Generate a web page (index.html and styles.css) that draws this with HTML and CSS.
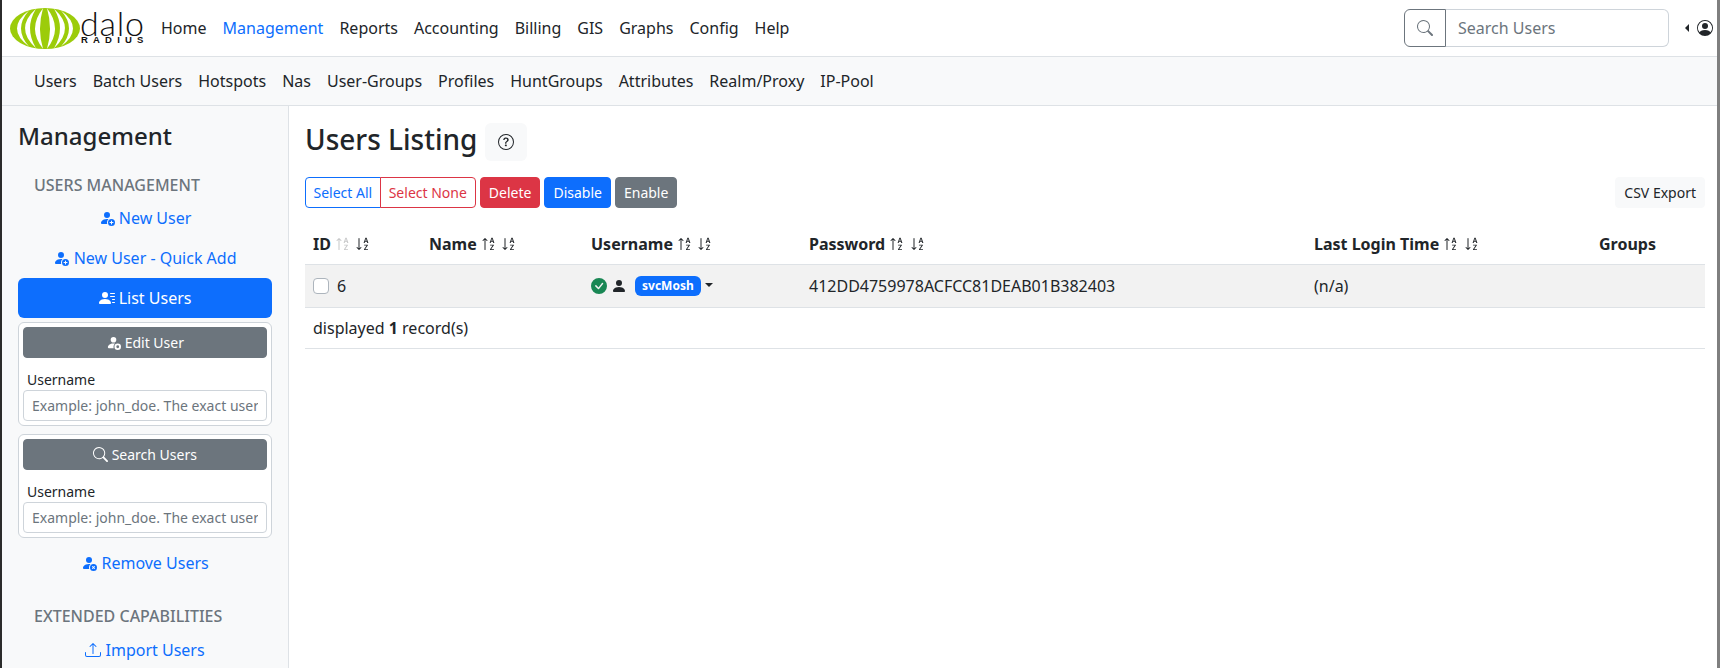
FILE: index.html
```html
<!DOCTYPE html>
<html lang="en">
<head>
    <meta charset="UTF-8">
    <meta name="viewport" content="width=device-width, initial-scale=1.0">
    <title>daloRADIUS - Users Listing</title>
    <link rel="stylesheet" href="styles.css">
</head>
<body>

<svg class="sprite" aria-hidden="true">
    <symbol id="i-add" viewBox="0 0 16 16"><path d="M12.5 16a3.5 3.5 0 1 0 0-7 3.5 3.5 0 0 0 0 7Zm.5-5v1h1a.5.5 0 0 1 0 1h-1v1a.5.5 0 0 1-1 0v-1h-1a.5.5 0 0 1 0-1h1v-1a.5.5 0 0 1 1 0Zm-2-6a3 3 0 1 1-6 0 3 3 0 0 1 6 0Z"/><path d="M2 13c0 1 1 1 1 1h5.256A4.493 4.493 0 0 1 8 12.5a4.49 4.49 0 0 1 1.544-3.393C9.077 9.038 8.564 9 8 9c-5 0-6 3-6 4Z"/></symbol>
    <symbol id="i-remove" viewBox="0 0 16 16"><path d="M11 5a3 3 0 1 1-6 0 3 3 0 0 1 6 0Z"/><path d="M2 13c0 1 1 1 1 1h5.256A4.493 4.493 0 0 1 8 12.5a4.49 4.49 0 0 1 1.544-3.393C9.077 9.038 8.564 9 8 9c-5 0-6 3-6 4Z"/><path d="M12.5 16a3.5 3.5 0 1 0 0-7 3.5 3.5 0 0 0 0 7Zm-.646-4.854.646.647.646-.647a.5.5 0 0 1 .708.708l-.647.646.647.646a.5.5 0 0 1-.708.708l-.646-.647-.646.647a.5.5 0 0 1-.708-.708l.647-.646-.647-.646a.5.5 0 0 1 .708-.708Z"/></symbol>
    <symbol id="i-gear" viewBox="0 0 16 16"><path d="M11 5a3 3 0 1 1-6 0 3 3 0 0 1 6 0Z"/><path d="M2 13c0 1 1 1 1 1h5.256A4.493 4.493 0 0 1 8 12.5a4.49 4.49 0 0 1 1.544-3.393C9.077 9.038 8.564 9 8 9c-5 0-6 3-6 4Z"/><path fill-rule="evenodd" d="M12.5 9a3.5 3.5 0 1 1 0 7 3.5 3.5 0 0 1 0-7Zm0 2a1.500 1.500 0 1 0 0 3 1.500 1.500 0 0 0 0-3Z"/></symbol>
    <symbol id="i-list" viewBox="0 0 16 16"><path d="M6 8a3 3 0 1 0 0-6 3 3 0 0 0 0 6zm-5 6s-1 0-1-1 1-4 6-4 6 3 6 4-1 1-1 1H1zM11 3.500a.5.5 0 0 1 .5-.5h4a.5.5 0 0 1 0 1h-4a.5.5 0 0 1-.5-.5zm.5 2.500a.5.5 0 0 0 0 1h4a.5.5 0 0 0 0-1h-4zm2 3a.5.5 0 0 0 0 1h2a.5.5 0 0 0 0-1h-2zm0 3a.5.5 0 0 0 0 1h2a.5.5 0 0 0 0-1h-2z"/></symbol>
    <symbol id="i-search" viewBox="0 0 16 16"><path d="M11.742 10.344a6.500 6.500 0 1 0-1.397 1.398h-.001c.03.04.062.078.098.115l3.850 3.850a1 1 0 0 0 1.415-1.414l-3.850-3.850a1.007 1.007 0 0 0-.115-.1zM12 6.500a5.500 5.500 0 1 1-11 0 5.500 5.500 0 0 1 11 0z"/></symbol>
    <symbol id="i-upload" viewBox="0 0 16 16"><path d="M.5 9.900a.5.5 0 0 1 .5.5v2.500a1 1 0 0 0 1 1h12a1 1 0 0 0 1-1v-2.500a.5.5 0 0 1 1 0v2.500a2 2 0 0 1-2 2H2a2 2 0 0 1-2-2v-2.500a.5.5 0 0 1 .5-.5z"/><path d="M7.646 1.146a.5.5 0 0 1 .708 0l3 3a.5.5 0 0 1-.708.708L8.500 2.707V11.500a.5.5 0 0 1-1 0V2.707L5.354 4.854a.5.5 0 1 1-.708-.708l3-3z"/></symbol>
    <symbol id="i-help" viewBox="0 0 16 16"><path d="M8 15A7 7 0 1 1 8 1a7 7 0 0 1 0 14zm0 1A8 8 0 1 0 8 0a8 8 0 0 0 0 16z"/><path d="M5.255 5.786a.237.237 0 0 0 .241.247h.825c.138 0 .248-.113.266-.25.09-.656.54-1.134 1.342-1.134.686 0 1.314.343 1.314 1.168 0 .635-.374.927-.965 1.371-.673.489-1.206 1.060-1.168 1.987l.003.217a.25.25 0 0 0 .25.246h.811a.25.25 0 0 0 .25-.25v-.105c0-.718.273-.927 1.010-1.486.609-.463 1.244-.977 1.244-2.056 0-1.511-1.276-2.241-2.673-2.241-1.267 0-2.655.59-2.750 2.286zm1.557 5.763c0 .533.425.927 1.010.927.609 0 1.028-.394 1.028-.927 0-.552-.42-.94-1.029-.94-.584 0-1.009.388-1.009.94z"/></symbol>
    <symbol id="i-check" viewBox="0 0 16 16"><path d="M16 8A8 8 0 1 1 0 8a8 8 0 0 1 16 0zm-3.970-3.030a.75.75 0 0 0-1.080.022L7.477 9.417 5.384 7.323a.75.75 0 0 0-1.060 1.060L6.970 11.030a.75.75 0 0 0 1.079-.02l3.992-4.990a.75.75 0 0 0-.01-1.050z"/></symbol>
    <symbol id="i-person" viewBox="0 0 16 16"><path d="M3 14s-1 0-1-1 1-4 6-4 6 3 6 4-1 1-1 1H3Zm5-6a3 3 0 1 0 0-6 3 3 0 0 0 0 6Z"/></symbol>
    <symbol id="i-account" viewBox="0 0 16 16"><path d="M11 6a3 3 0 1 1-6 0 3 3 0 0 1 6 0z"/><path fill-rule="evenodd" d="M0 8a8 8 0 1 1 16 0A8 8 0 0 1 0 8zm8-7a7 7 0 0 0-5.468 11.370C3.242 11.226 4.805 10 8 10s4.757 1.225 5.468 2.370A7 7 0 0 0 8 1z"/></symbol>
    <symbol id="i-up" viewBox="0 0 16 16"><path fill-rule="evenodd" d="M10.082 5.629 9.664 7H8.598l1.789-5.332h1.234L13.402 7h-1.120l-.419-1.371h-1.781zm1.570-.785L11 2.687h-.047l-.652 2.157h1.351z"/><path d="M12.960 14H9.028v-.691l2.579-3.720v-.054H9.098v-.867h3.785v.691l-2.567 3.720v.054h2.645V14zM4.500 13.500a.5.5 0 0 1-1 0V3.707L2.354 4.854a.5.5 0 1 1-.708-.708l2-1.999.007-.007a.498.498 0 0 1 .7.006l2 2a.5.5 0 1 1-.707.708L4.500 3.707V13.500z"/></symbol>
    <symbol id="i-down" viewBox="0 0 16 16"><path fill-rule="evenodd" d="M10.082 5.629 9.664 7H8.598l1.789-5.332h1.234L13.402 7h-1.120l-.419-1.371h-1.781zm1.570-.785L11 2.687h-.047l-.652 2.157h1.351z"/><path d="M12.960 14H9.028v-.691l2.579-3.720v-.054H9.098v-.867h3.785v.691l-2.567 3.720v.054h2.645V14zM4.500 2.500a.5.5 0 0 0-1 0v9.793l-1.146-1.147a.5.5 0 0 0-.708.708l2 1.999.007.007a.497.497 0 0 0 .7-.006l2-2a.5.5 0 0 0-.707-.708L4.500 12.293V2.500z"/></symbol>
</svg>

<div class="window">

    <nav class="topbar">
        <a class="logo" href="#">
            <svg class="logo-globe" viewBox="0 0 70 41">
                <ellipse cx="35" cy="20.500" rx="35" ry="20.500" fill="#9ccc0a"/>
                <g id="stripes" fill="#fff">
                    <path d="M37 .2Q53 20.500 37 40.800Q43 20.500 37 .2Z"/>
                    <path d="M44 .8Q66 20.500 44 40.200Q56 20.500 44 .8Z"/>
                    <path d="M51 2.500Q75 20.500 51 38.500Q67 20.500 51 2.500Z"/>
                </g>
                <use href="#stripes" transform="translate(70) scale(-1,1)"/>
            </svg>
            <span class="logo-text">
                <span class="logo-dalo">dalo</span>
                <span class="logo-radius">RADIUS</span>
            </span>
        </a>
        <ul class="topmenu">
            <li><a href="#">Home</a></li>
            <li><a class="active" href="#">Management</a></li>
            <li><a href="#">Reports</a></li>
            <li><a href="#">Accounting</a></li>
            <li><a href="#">Billing</a></li>
            <li><a href="#">GIS</a></li>
            <li><a href="#">Graphs</a></li>
            <li><a href="#">Config</a></li>
            <li><a href="#">Help</a></li>
        </ul>
        <form class="topsearch">
            <button class="topsearch-btn" type="button"><svg class="bi"><use href="#i-search"/></svg></button>
            <input type="text" placeholder="Search Users">
        </form>
        <a class="account" href="#"><span class="caret-left"></span><svg class="bi"><use href="#i-account"/></svg></a>
    </nav>

    <nav class="subbar">
        <a href="#">Users</a>
        <a href="#">Batch Users</a>
        <a href="#">Hotspots</a>
        <a href="#">Nas</a>
        <a href="#">User-Groups</a>
        <a href="#">Profiles</a>
        <a href="#">HuntGroups</a>
        <a href="#">Attributes</a>
        <a href="#">Realm/Proxy</a>
        <a href="#">IP-Pool</a>
    </nav>

    <div class="columns">
        <aside class="sidebar">
            <h4>Management</h4>
            <h6>USERS MANAGEMENT</h6>
            <a class="side-link" href="#"><svg class="bi"><use href="#i-add"/></svg> New User</a>
            <a class="side-link" href="#"><svg class="bi"><use href="#i-add"/></svg> New User - Quick Add</a>
            <a class="side-link active" href="#"><svg class="bi"><use href="#i-list"/></svg> List Users</a>

            <form class="side-form">
                <button class="btn btn-gray btn-wide" type="button"><svg class="bi bi-md"><use href="#i-gear"/></svg> Edit User</button>
                <label for="editName">Username</label>
                <input type="text" id="editName" placeholder="Example: john_doe. The exact username">
            </form>

            <form class="side-form">
                <button class="btn btn-gray btn-wide" type="button"><svg class="bi bi-md"><use href="#i-search"/></svg> Search Users</button>
                <label for="searchName">Username</label>
                <input type="text" id="searchName" placeholder="Example: john_doe. The exact username">
            </form>

            <a class="side-link side-remove" href="#"><svg class="bi"><use href="#i-remove"/></svg> Remove Users</a>

            <h6 class="side-second">EXTENDED CAPABILITIES</h6>
            <a class="side-link" href="#"><svg class="bi"><use href="#i-upload"/></svg> Import Users</a>
        </aside>

        <main class="content">
            <div class="title-row">
                <h1>Users Listing</h1>
                <button class="help-btn" type="button"><svg class="bi"><use href="#i-help"/></svg></button>
            </div>

            <div class="toolbar">
                <div class="btn-pair">
                    <button class="btn btn-line-blue" type="button">Select All</button>
                    <button class="btn btn-line-red" type="button">Select None</button>
                </div>
                <button class="btn btn-red" type="button">Delete</button>
                <button class="btn btn-blue" type="button">Disable</button>
                <button class="btn btn-gray" type="button">Enable</button>
                <button class="btn btn-light" type="button">CSV Export</button>
            </div>

            <table class="users">
                <colgroup>
                    <col class="c-id"><col class="c-name"><col class="c-user"><col class="c-pass"><col class="c-login"><col class="c-groups">
                </colgroup>
                <thead>
                    <tr>
                        <th>ID <svg class="bi faded"><use href="#i-up"/></svg> <svg class="bi"><use href="#i-down"/></svg></th>
                        <th>Name <svg class="bi"><use href="#i-up"/></svg> <svg class="bi"><use href="#i-down"/></svg></th>
                        <th>Username <svg class="bi"><use href="#i-up"/></svg> <svg class="bi"><use href="#i-down"/></svg></th>
                        <th>Password <svg class="bi"><use href="#i-up"/></svg> <svg class="bi"><use href="#i-down"/></svg></th>
                        <th>Last Login Time <svg class="bi"><use href="#i-up"/></svg> <svg class="bi"><use href="#i-down"/></svg></th>
                        <th>Groups</th>
                    </tr>
                </thead>
                <tbody>
                    <tr>
                        <td><span class="check-cell"><input type="checkbox"> 6</span></td>
                        <td></td>
                        <td>
                            <span class="user-cell">
                                <svg class="bi ok"><use href="#i-check"/></svg>
                                <svg class="bi"><use href="#i-person"/></svg>
                                <a class="badge" href="#">svcMosh</a>
                                <span class="caret-down"></span>
                            </span>
                        </td>
                        <td>412DD4759978ACFCC81DEAB01B382403</td>
                        <td>(n/a)</td>
                        <td></td>
                    </tr>
                </tbody>
                <tfoot>
                    <tr>
                        <td colspan="6">displayed <strong>1</strong> record(s)</td>
                    </tr>
                </tfoot>
            </table>
        </main>
    </div>
</div>

</body>
</html>
```

FILE: styles.css
```css
* {
    box-sizing: border-box;
}

html, body {
    height: 100%;
}

body {
    margin: 0;
    font-family: "Noto Sans", sans-serif;
    font-size: 16px;
    line-height: 1.5;
    color: #212529;
    background-color: #fff;
    overflow: hidden;
}

a {
    text-decoration: none;
    color: inherit;
}

.sprite {
    display: none;
}

.bi {
    width: 16px;
    height: 16px;
    fill: currentColor;
    vertical-align: -2px;
}

.bi-md {
    width: 15px;
    height: 15px;
}

.window {
    height: 100%;
    margin-right: 1px;
    border-left: 2px solid #2b2b2b;
    border-right: 3px solid #7f7f7f;
    display: flex;
    flex-direction: column;
    overflow: hidden;
}

/* top navbar */
.topbar {
    height: 57px;
    flex: none;
    display: flex;
    align-items: center;
    border-bottom: 1px solid #dee2e6;
    background-color: #fff;
}

.logo {
    display: flex;
    align-items: center;
    margin-left: 8px;
    width: 135px;
}

.logo-globe {
    width: 70px;
    height: 41px;
    flex: none;
}

.logo-text {
    display: flex;
    flex-direction: column;
    width: 65px;
    color: #111;
}

.logo-dalo {
    font-family: "Lato", sans-serif;
    font-weight: 300;
    font-size: 34px;
    line-height: 24px;
    letter-spacing: .8px;
}

.logo-radius {
    font-family: "Liberation Sans", sans-serif;
    font-weight: bold;
    font-size: 9.500px;
    line-height: 10px;
    letter-spacing: 5.200px;
    white-space: nowrap;
    padding-left: 1px;
}

.topmenu {
    list-style-type: none;
    margin: 0;
    padding: 0;
    display: flex;
    gap: 16px;
    margin-left: 16px;
}

.topmenu a.active {
    color: #0d6efd;
}

.topsearch {
    display: flex;
    width: 265px;
    height: 38px;
    margin-left: auto;
}

.topsearch-btn {
    width: 42px;
    flex: none;
    padding: 0;
    color: #6c757d;
    background: #fff;
    border: 1px solid #6c757d;
    border-radius: 6px 0 0 6px;
}

.topsearch input {
    flex: 1;
    min-width: 0;
    font: inherit;
    padding: 6px 12px;
    border: 1px solid #ced4da;
    border-left: none;
    border-radius: 0 6px 6px 0;
}

.account {
    display: flex;
    align-items: center;
    gap: 8px;
    width: 48px;
    padding-left: 16px;
}

.caret-left {
    border-top: 4.500px solid transparent;
    border-bottom: 4.500px solid transparent;
    border-right: 4.500px solid #212529;
}

::placeholder {
    color: #6c757d;
}

/* second navbar */
.subbar {
    height: 49px;
    flex: none;
    display: flex;
    align-items: center;
    gap: 16px;
    padding-left: 32px;
    background-color: #f8f9fa;
    border-bottom: 1px solid #dee2e6;
}

.columns {
    flex: 1;
    display: flex;
    min-height: 0;
}

/* sidebar */
.sidebar {
    width: 287px;
    flex: none;
    padding: 15px 16px 0;
    background-color: #f8f9fa;
    border-right: 1px solid #dee2e6;
    overflow: hidden;
}

.sidebar h4 {
    font-size: 24px;
    font-weight: 500;
    line-height: 29px;
    margin: 0 0 23px;
}

.sidebar h6 {
    font-size: 16px;
    font-weight: 500;
    line-height: 24px;
    color: #6c757d;
    margin: 0 0 1px 16px;
}

.sidebar .side-second {
    margin-top: 21px;
    margin-bottom: 2px;
}

.side-link {
    display: block;
    text-align: center;
    color: #0d6efd;
    padding: 8px 16px;
    border-radius: 6px;
}

.side-link.active {
    color: #fff;
    background-color: #0d6efd;
}

.side-form {
    margin-top: 4px;
    padding: 4px;
    background-color: #fff;
    border: 1px solid #ced4da;
    border-radius: 6px;
}

.side-form + .side-form {
    margin-top: 8px;
}

.side-form label {
    display: block;
    font-size: 14px;
    line-height: 21px;
    margin: 11px 0 0 4px;
}

.side-form input {
    display: block;
    width: 100%;
    height: 31px;
    font: inherit;
    font-size: 14px;
    padding: 4px 8px;
    background: #fff;
    border: 1px solid #ced4da;
    border-radius: 4px;
}

.side-remove {
    margin-top: 5px;
}

/* buttons */
.btn {
    font: inherit;
    font-size: 14px;
    line-height: 21px;
    height: 31px;
    padding: 4px 8px;
    border: 1px solid transparent;
    border-radius: 4px;
    color: #fff;
    cursor: pointer;
}

.btn-wide {
    display: block;
    width: 100%;
}

.btn-gray {
    background-color: #6c757d;
    border-color: #6c757d;
}

.btn-red {
    background-color: #dc3545;
    border-color: #dc3545;
}

.btn-blue {
    background-color: #0d6efd;
    border-color: #0d6efd;
}

.btn-light {
    color: #212529;
    background-color: #f8f9fa;
    border-color: #f8f9fa;
    margin-left: auto;
}

.btn-pair {
    display: flex;
}

.btn-line-blue {
    color: #0d6efd;
    background: #fff;
    border-color: #0d6efd;
    border-radius: 4px 0 0 4px;
    padding: 4px 7.500px;
}

.btn-line-red {
    color: #dc3545;
    background: #fff;
    border-color: #dc3545;
    border-radius: 0 4px 4px 0;
    margin-left: -1px;
}

/* main content */
.content {
    flex: 1;
    min-width: 0;
    padding: 16px 12px 0 16px;
}

.title-row {
    display: flex;
    align-items: flex-start;
    gap: 8px;
    height: 42px;
}

.title-row h1 {
    font-size: 28px;
    font-weight: 500;
    line-height: 34px;
    margin: 0;
}

.help-btn {
    width: 42px;
    height: 38px;
    padding: 0;
    margin-top: 1px;
    color: #212529;
    background-color: #f8f9fa;
    border: none;
    border-radius: 6px;
}

.toolbar {
    display: flex;
    gap: 4px;
    margin-top: 13px;
}

.users {
    width: 100%;
    margin-top: 16px;
    border-collapse: collapse;
    table-layout: fixed;
}

.c-id { width: 116px; }
.c-name { width: 162px; }
.c-user { width: 218px; }
.c-pass { width: 505px; }
.c-login { width: 285px; }
.c-groups { width: 114px; }

.users th,
.users td {
    padding: 8px;
    text-align: left;
    border-bottom: 1px solid #dee2e6;
}

.users tbody td {
    height: 43px;
    background-color: #f2f2f2;
}

.users th {
    font-weight: 700;
}

.users .faded {
    opacity: .25;
}

.check-cell {
    display: flex;
    align-items: center;
    gap: 8px;
}

.check-cell input {
    appearance: none;
    width: 16px;
    height: 16px;
    margin: 0;
    background: #fff;
    border: 1px solid #adb5bd;
    border-radius: 4px;
}

.user-cell {
    display: flex;
    align-items: center;
    gap: 4px;
}

.ok {
    color: #198754;
}

.badge {
    margin-left: 4px;
    padding: 0 7px;
    height: 20px;
    display: inline-block;
    font-size: 12px;
    font-weight: 700;
    line-height: 20px;
    color: #fff;
    background-color: #0d6efd;
    border-radius: 6px;
}

.caret-down {
    border-left: 4.500px solid transparent;
    border-right: 4.500px solid transparent;
    border-top: 4.500px solid #212529;
    margin-top: -3px;
}
```
